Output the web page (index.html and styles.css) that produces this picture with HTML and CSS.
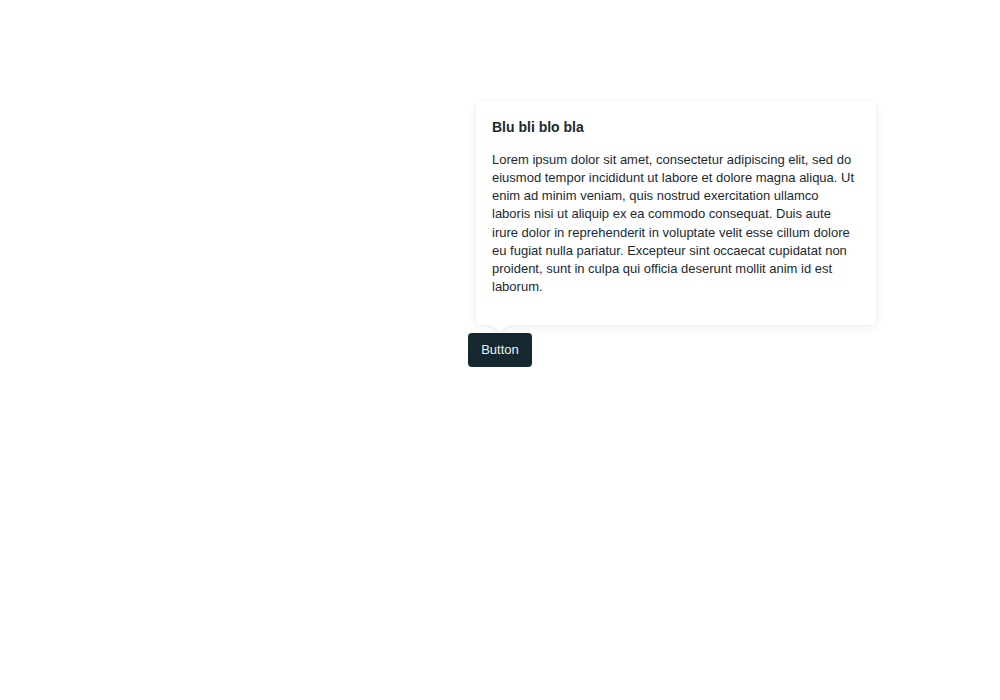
FILE: index.html
```html
<!DOCTYPE html>
<html>
<head>
<meta charset="utf-8">
<link rel="stylesheet" href="styles.css">
</head>
<body>
<div class="stage">
  <div class="anchor">
    <div class="popover">
      <h3 class="popover-title">Blu bli blo bla</h3>
      <p class="popover-body">Lorem ipsum dolor sit amet, consectetur adipiscing elit, sed do eiusmod tempor incididunt ut labore et dolore magna aliqua. Ut enim ad minim veniam, quis nostrud exercitation ullamco laboris nisi ut aliquip ex ea commodo consequat. Duis aute irure dolor in reprehenderit in voluptate velit esse cillum dolore eu fugiat nulla pariatur. Excepteur sint occaecat cupidatat non proident, sunt in culpa qui officia deserunt mollit anim id est laborum.</p>
      <span class="popover-arrow"></span>
    </div>
    <button class="btn">Button</button>
  </div>
</div>
</body>
</html>
```

FILE: styles.css
```css
html, body {
  margin: 0;
  padding: 0;
  background: #ffffff;
  font-family: "Liberation Sans", Arial, sans-serif;
}
.stage {
  display: flex;
  justify-content: center;
  padding-top: 333px;
}
.anchor {
  position: relative;
}
.btn {
  display: block;
  width: 64px;
  height: 34px;
  padding: 0 0 2px;
  border: 0;
  border-radius: 4px;
  background: #16282f;
  color: #eef2f3;
  font-family: "Liberation Sans", Arial, sans-serif;
  font-size: 13px;
  cursor: pointer;
}
.popover {
  position: absolute;
  left: 8px;
  bottom: 42px;
  width: 400px;
  height: 224px;
  box-sizing: border-box;
  padding: 16px 16px 0;
  background: #ffffff;
  border-radius: 4px;
  box-shadow: 0 2px 10px rgba(0, 0, 0, 0.08), 0 0 2px rgba(0, 0, 0, 0.04);
  color: #1b2a31;
}
.popover-title {
  margin: 0 0 14px;
  font-size: 14px;
  font-weight: bold;
  line-height: 20px;
}
.popover-body {
  margin: 0;
  font-size: 13px;
  line-height: 18.15px;
}
.popover-arrow {
  position: absolute;
  left: 16px;
  bottom: -7px;
  width: 0;
  height: 0;
  border-left: 8px solid transparent;
  border-right: 8px solid transparent;
  border-top: 7px solid #ffffff;
  filter: drop-shadow(0 2px 1px rgba(0, 0, 0, 0.05));
}
```
